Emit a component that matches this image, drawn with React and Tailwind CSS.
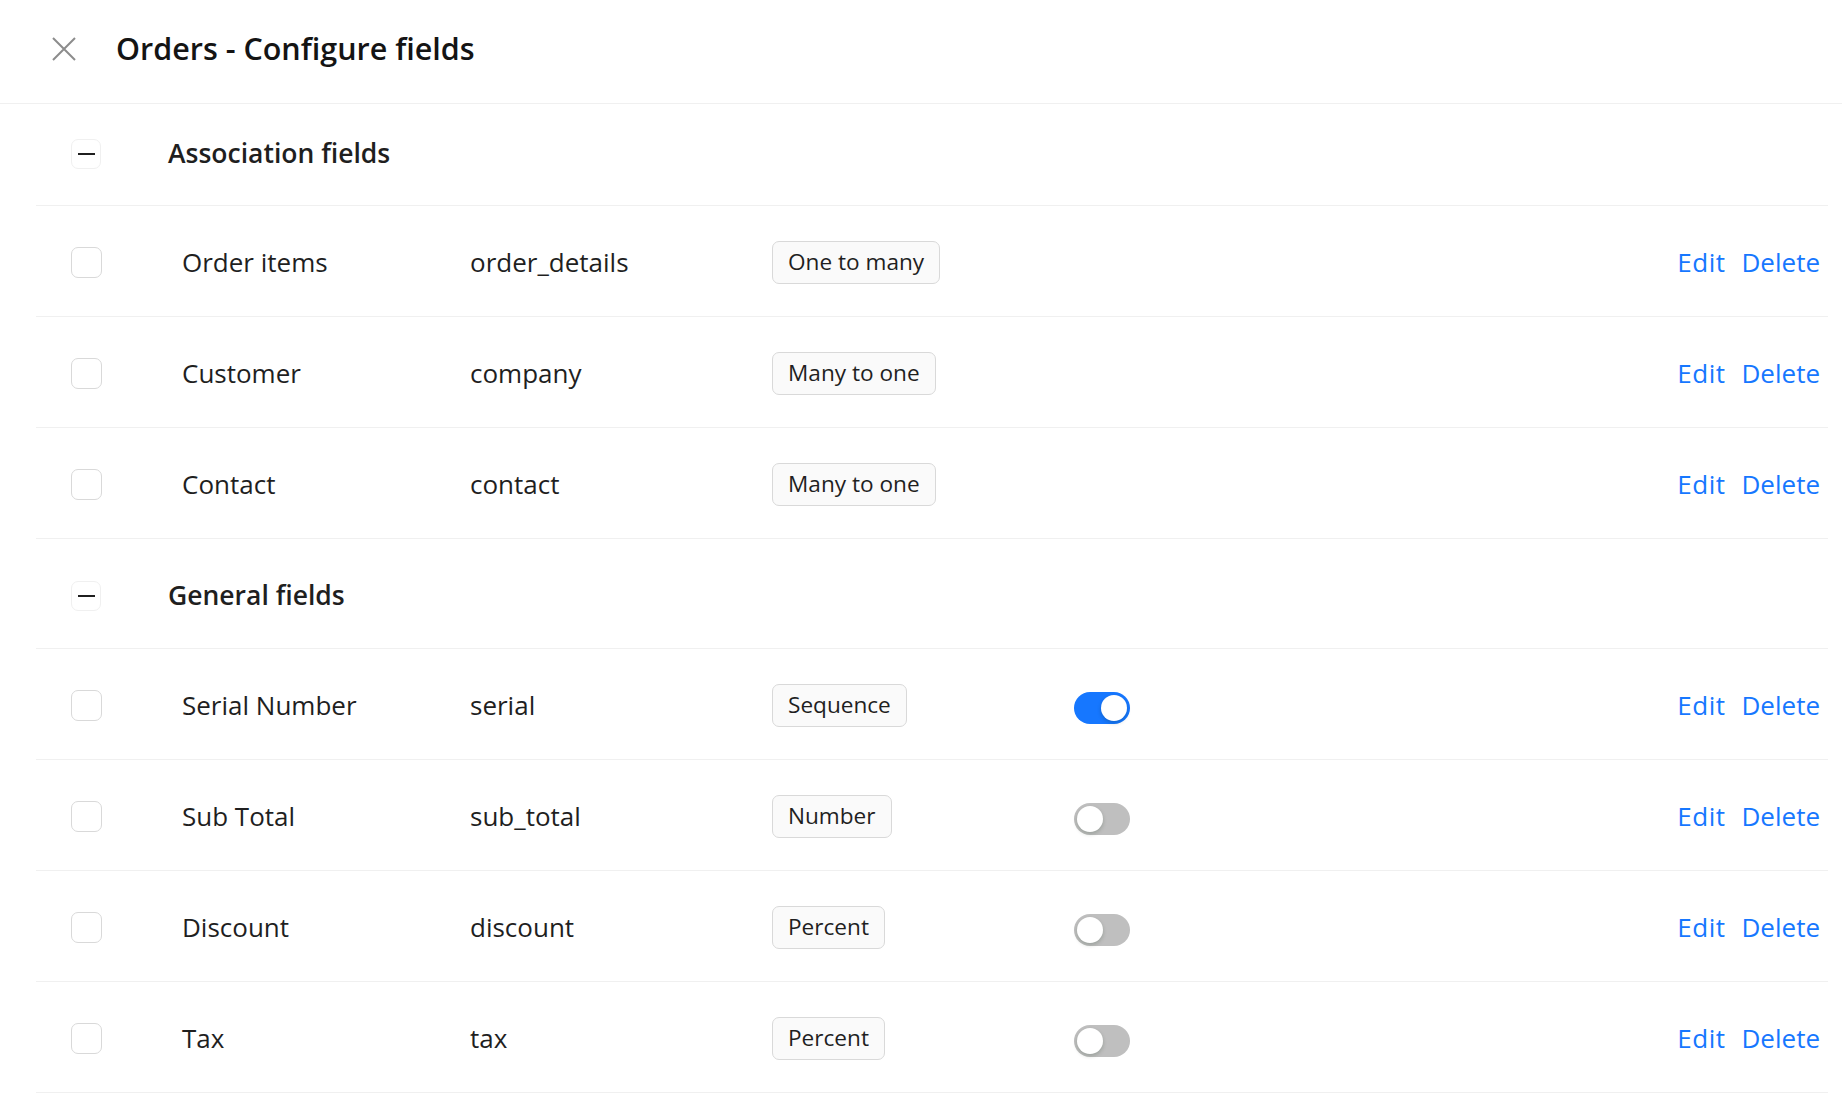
import React from 'react';

const groups = [
    {
        title: 'Association fields',
        height: 'h-[102px] pb-[2px]',
        fields: [
            { label: 'Order items', name: 'order_details', type: 'One to many' },
            { label: 'Customer', name: 'company', type: 'Many to one' },
            { label: 'Contact', name: 'contact', type: 'Many to one' },
        ],
    },
    {
        title: 'General fields',
        height: 'h-[110px] pt-[5px]',
        fields: [
            { label: 'Serial Number', name: 'serial', type: 'Sequence', toggle: true, on: true },
            { label: 'Sub Total', name: 'sub_total', type: 'Number', toggle: true },
            { label: 'Discount', name: 'discount', type: 'Percent', toggle: true },
            { label: 'Tax', name: 'tax', type: 'Percent', toggle: true },
        ],
    },
];

const Toggle = ({ on }) => (
    <div
        className={`mt-[6px] flex h-[32px] w-[56px] items-center rounded-full p-[3px] ${
            on ? 'justify-end bg-[#1677ff]' : 'justify-start bg-[#bfbfbf]'
        }`}
    >
        <span className="h-[26px] w-[26px] rounded-full bg-white shadow-[0_2px_4px_rgba(0,35,11,0.2)]" />
    </div>
);

const FieldRow = ({ field }) => (
    <div className="flex h-[111px] items-center border-b border-[#f0f0f0] pt-[2px]">
        <div className="w-[146px] pl-[35px]">
            <span className="block h-[31px] w-[31px] rounded-[7px] border-[1.5px] border-[#d9d9d9] bg-white" />
        </div>
        <div className="w-[288px] text-[26px] text-[#1f1f1f]">{field.label}</div>
        <div className="w-[302px] text-[26px] text-[#1f1f1f]">{field.name}</div>
        <div className="w-[302px]">
            <span className="inline-flex h-[43px] items-center rounded-[7px] border-[1.5px] border-[#d9d9d9] bg-[#fafafa] px-[15px] text-[22.6px] text-[#1f1f1f]">
                {field.type}
            </span>
        </div>
        <div className="w-[100px]">{field.toggle && <Toggle on={field.on} />}</div>
        <div className="ml-auto flex gap-[16px] pr-[8px] text-[26px] text-[#1677ff]">
            <span className="cursor-pointer tracking-[0.5px]">Edit</span>
            <span className="cursor-pointer">Delete</span>
        </div>
    </div>
);

export default function App() {
    return (
        <div className="min-h-screen bg-white font-['Open_Sans',sans-serif]">
            <div className="flex h-[104px] items-center gap-[40px] border-b border-[#f0f0f0] pb-[6px] pl-[52px]">
                <svg width="24" height="24" viewBox="0 0 24 24" className="text-[#8c8c8c]">
                    <path d="M1 1 L23 23 M23 1 L1 23" stroke="currentColor" strokeWidth="2" fill="none" />
                </svg>
                <h1 className="text-[30.5px] font-semibold text-[#141414]">Orders - Configure fields</h1>
            </div>

            <div className="ml-[36px] mr-[14px]">
                {groups.map((group) => (
                    <div key={group.title}>
                        <div className={`flex ${group.height} items-center border-b border-[#f0f0f0]`}>
                            <div className="w-[132px] pl-[35px]">
                                <span className="flex h-[30px] w-[30px] items-center justify-center rounded-[7px] border-[1.5px] border-[#f0f0f0]">
                                    <span className="h-[2px] w-[17px] bg-[#1f1f1f]" />
                                </span>
                            </div>
                            <div className="text-[26.5px] font-semibold text-[#1f1f1f]">{group.title}</div>
                        </div>
                        {group.fields.map((field) => (
                            <FieldRow key={field.name} field={field} />
                        ))}
                    </div>
                ))}
            </div>
        </div>
    );
}
